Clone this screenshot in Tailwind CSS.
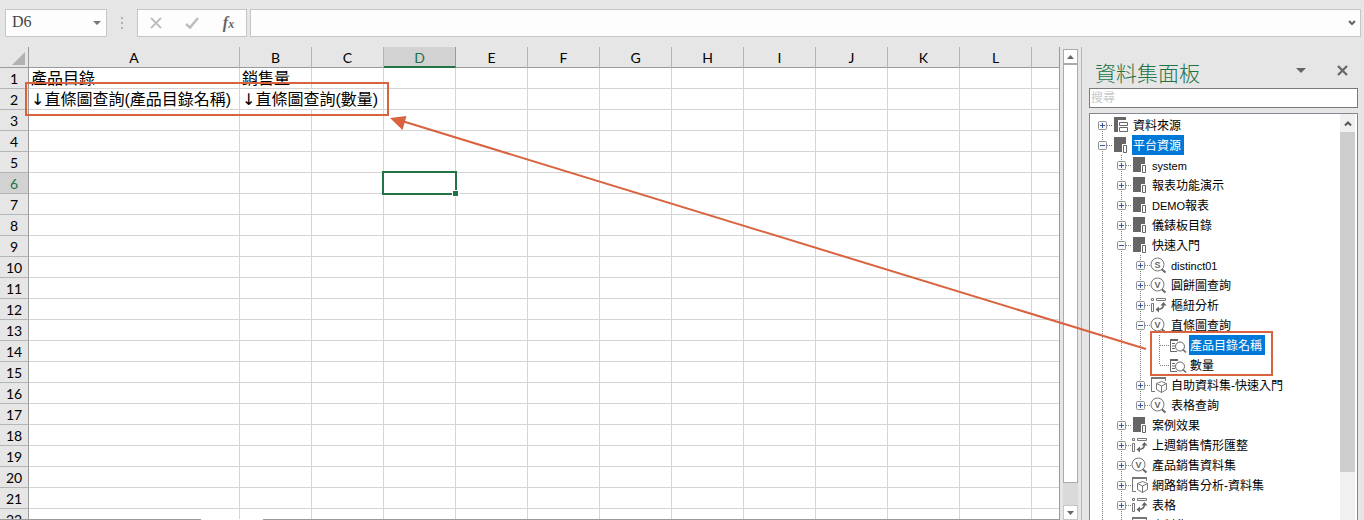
<!DOCTYPE html>
<html lang="zh-Hant">
<head>
  <meta charset="UTF-8" />
  <meta name="viewport" content="width=device-width, initial-scale=1.0" />
  <title>資料集面板</title>
  <script src="https://cdn.jsdelivr.net/npm/@tailwindcss/browser@4"></script>
</head>
<body class="relative flex h-screen flex-col overflow-hidden bg-[#e6e6e6] text-black font-['Liberation_Sans','Noto_Sans_CJK_TC',sans-serif]">

  <!-- Formula bar -->
  <header class="flex h-[47px] shrink-0 pt-[9px] pl-[5px] pr-[3px]">
    <div class="flex h-7 w-[102px] items-center border border-[#c6c6c6] bg-[#fdfdfd]">
      <input id="nameBox" aria-label="名稱方塊" value="D6" class="min-w-0 flex-1 pl-[6px] pb-[2px] text-[16px] leading-5 text-[#444] font-['Liberation_Serif',serif]" />
      <button aria-label="展開名稱" class="flex h-full w-[18px] items-center justify-center">
        <svg class="h-1 w-2" viewBox="0 0 8 4"><path d="M0 0h8L4 4z" fill="#777" /></svg>
      </button>
    </div>
    <div class="flex h-7 w-[30px] items-center justify-center">
      <svg class="h-3 w-0.5" viewBox="0 0 2 12"><path d="M0 0h2v2H0zM0 5h2v2H0zM0 10h2v2H0z" fill="#b0b0b0" /></svg>
    </div>
    <div class="flex h-7 w-[110px] items-center justify-around border border-[#c6c6c6] bg-[#fdfdfd]">
      <button aria-label="取消"><svg class="size-3" viewBox="0 0 12 12"><path d="M1 1l10 10M11 1L1 11" stroke="#bdbdbd" stroke-width="1.8" /></svg></button>
      <button aria-label="輸入"><svg class="h-3 w-[14px]" viewBox="0 0 14 12"><path d="M1 7l4 3.6L13 1" fill="none" stroke="#bdbdbd" stroke-width="2.4" /></svg></button>
      <button aria-label="插入函數" class="text-[16px] leading-4 font-bold italic text-[#666] font-['Liberation_Serif',serif]">f<span class="text-[12px]">x</span></button>
    </div>
    <div class="ml-[3px] flex h-7 flex-1 items-center border border-[#c6c6c6] bg-[#fdfdfd]">
      <input id="formulaInput" aria-label="資料編輯列" class="h-full min-w-0 flex-1 px-2" />
      <button aria-label="展開資料編輯列" class="mr-1">
        <svg class="h-[6px] w-2" viewBox="0 0 8 6"><path d="M1 1l3 3 3-3" fill="none" stroke="#666" stroke-width="2" /></svg>
      </button>
    </div>
  </header>

  <div class="flex min-h-0 flex-1">
    <!-- Worksheet -->
    <main class="relative min-w-0 flex-1 overflow-hidden border-r border-[#9a9a9a]">
      <table class="w-full table-fixed border-separate border-spacing-0">
        <thead id="sheetHead"></thead>
        <tbody id="sheetBody" class="bg-white"></tbody>
      </table>
      <div class="absolute bottom-0 left-0 h-px w-full bg-[#9a9a9a]">
        <div class="ml-[201px] h-px w-[62px] bg-white"></div>
      </div>
    </main>

    <!-- Sheet scrollbar -->
    <div class="flex w-[22px] shrink-0 flex-col border-r border-[#b5b5b5] bg-[#e6e6e6] pt-[2px] pl-[3px] pr-[3px]">
      <button aria-label="向上捲動" class="flex h-[15px] shrink-0 items-center justify-center border border-[#ababab] bg-white">
        <svg class="h-1 w-[7px]" viewBox="0 0 7 4"><path d="M0 4h7L3.500 0z" fill="#666" /></svg>
      </button>
      <div class="flex-1 bg-[#dadada]">
        <div class="h-[95%] border border-[#ababab] bg-white"></div>
      </div>
      <button aria-label="向下捲動" class="flex h-[15px] shrink-0 items-center justify-center border border-[#c6c6c6] bg-white">
        <svg class="h-1 w-[7px]" viewBox="0 0 7 4"><path d="M0 0h7L3.500 4z" fill="#666" /></svg>
      </button>
    </div>

    <!-- Dataset panel -->
    <aside class="flex w-[282px] shrink-0 flex-col pl-[7px] pr-[6px]">
      <div class="flex h-[41px] shrink-0 items-start pl-[6px] pr-[10px]">
        <h1 class="flex-1 pt-[13px] text-[21px] leading-7 font-light text-[#217346]">資料集面板</h1>
        <button aria-label="面板選項" class="mt-[21px] mr-[31px]"><svg class="h-[5px] w-[10px]" viewBox="0 0 10 5"><path d="M0 0h10L5 5z" fill="#666" /></svg></button>
        <button aria-label="關閉" class="mt-[18px]"><svg class="size-[11px]" viewBox="0 0 11 11"><path d="M1 1l9 9M10 1L1 10" stroke="#666" stroke-width="2.200" /></svg></button>
      </div>
      <input id="search" aria-label="搜尋" placeholder="搜尋" class="h-5 w-full shrink-0 border border-[#7a7a7a] bg-white px-px text-[12px] leading-4 placeholder:text-[#c8c8c8]" />
      <div class="mt-[5px] flex min-h-0 flex-1 overflow-hidden border border-b-0 border-[#828790] bg-white pr-[2px]">
        <ul id="tree" role="tree" class="min-w-0 flex-1 pt-px pl-[3px]"></ul>
        <div class="flex w-[15px] shrink-0 flex-col bg-[#f0f0f0] pt-px">
          <button aria-label="向上捲動" class="flex h-[17px] shrink-0 items-center justify-center">
            <svg class="h-[5px] w-2" viewBox="0 0 8 5"><path d="M1 4.500l3-3 3 3" fill="none" stroke="#555" stroke-width="2" /></svg>
          </button>
          <div class="h-[340px] shrink-0 bg-[#cdcdcd]"></div>
        </div>
      </div>
    </aside>
  </div>

  <!-- Callouts -->
  <div class="absolute top-[82px] left-[25px] h-[34px] w-[364px] border-2 border-[#d9623f]"></div>
  <div class="absolute top-[331px] right-[91px] h-[45px] w-[123px] border-2 border-[#d9623f]"></div>
  <svg class="pointer-events-none absolute top-0 left-0 h-[520px] w-[1364px]" viewBox="0 0 1364 520">
    <path d="M1146 349L402 121" stroke="#d9623f" stroke-width="2" />
    <path d="M390 118l16.500-2-4 14z" fill="#d9623f" />
  </svg>

  <script>
    const columns = ['A', 'B', 'C', 'D', 'E', 'F', 'G', 'H', 'I', 'J', 'K', 'L'];
    const arrow = `<span class="font-['DejaVu_Sans',sans-serif]">↓</span>`;
    const cells = {
      A1: '產品目錄',
      B1: '銷售量',
      A2: arrow + '直條圖查詢(產品目錄名稱)',
      B2: arrow + '直條圖查詢(數量)',
    };
    const active = { col: 'D', row: 6 };

    // Column headers
    const corner = `
      <th class="h-[21px] w-[29px] border-r border-b border-[#9a9a9a] p-0">
        <svg class="ml-3 mt-0.5 size-[13px]" viewBox="0 0 13 13"><path d="M13 0v13H0z" fill="#b1b1b1" /></svg>
      </th>`;
    document.getElementById('sheetHead').innerHTML = `
      <tr class="h-[21px] text-[14px] leading-4 font-['Lato',sans-serif]">
        ${corner}
        ${columns.map(c => `
          <th scope="col" class="${c === 'A' ? 'w-[211px]' : 'w-[72px]'} h-[21px] border-r p-0 pt-0.5 font-normal
            ${c === active.col ? 'border-r-[#9a9a9a] border-b-2 border-b-[#217346] bg-[#d2d2d2] text-[#217346]' : 'border-b border-r-[#b5b5b5] border-b-[#9a9a9a]'}">${c}</th>`).join('')}
        <th class="border-b border-b-[#9a9a9a] p-0"></th>
      </tr>`;

    // Rows
    let rows = '';
    for (let r = 1; r <= 22; r++) {
      rows += `<tr class="h-[21px]">
        <th scope="row" class="h-[21px] border-r border-b border-r-[#9a9a9a] border-b-[#b5b5b5] p-0 pt-0.5 text-[14px] leading-4 font-normal font-['Lato',sans-serif]
          ${r === active.row ? 'bg-[#d2d2d2] text-[#217346]' : 'bg-[#e6e6e6]'}">${r}</th>`;
      columns.forEach(c => {
        const text = cells[c + r] || '';
        const selected = c === active.col && r === active.row;
        rows += `<td class="h-[21px] border-b border-[#d4d4d4] p-0 ${selected ? 'relative z-10' : ''} ${c + r === 'B2' ? '' : 'border-r'}">
          ${text ? `<div class="h-5 pl-[2px] text-[16px] leading-[21px] whitespace-nowrap">${text}</div>` : ''}
          ${selected ? `<div class="absolute -top-[2px] -left-[2px] h-6 w-[75px] border-2 border-[#217346]">
            <div class="absolute -right-[4px] -bottom-[4px] size-[7px] border border-white bg-[#217346]"></div>
          </div>` : ''}
        </td>`;
      });
      rows += '<td class="border-b border-[#d4d4d4] p-0"></td></tr>';
    }
    document.getElementById('sheetBody').innerHTML = rows;

    // Tree icons
    const circle = letter => `
      <circle cx="7.500" cy="9.500" r="6.500" fill="#fff" stroke="#777" />
      <path d="M12 14.500l3.500 3" stroke="#666" stroke-width="2" />
      <text x="7.500" y="13" text-anchor="middle" font-size="9" font-weight="bold" fill="#666">${letter}</text>`;
    const icons = {
      source: `
        <path d="M2 2h12v3H6v12H2z" fill="#666" />
        <path d="M7.500 7.500h8v3h-8zM7.500 12.500h8v4h-8z" fill="#fff" stroke="#666" />`,
      folder: `
        <path d="M2 2h12v15H2z" fill="#666" />
        <path d="M10 9h6v10h-6z" fill="#fff" />
        <path d="M11.500 10.500h3v7h-3z" fill="#fff" stroke="#666" />`,
      sql: circle('S'),
      view: circle('V'),
      pivot: `
        <path d="M1.500 3.500h2v2h-2zM6.500 3.500h9v2h-9zM1.500 8.500h2v8h-2z" fill="none" stroke="#777" />
        <path d="M13.500 9c0 3.500-2 5.500-6 5.500" fill="none" stroke="#666" stroke-width="1.500" />
        <path d="M13.500 7l3 3.500h-6zM5.500 14.500l3.500-3v6z" fill="#666" />`,
      cube: `
        <path d="M5 16.500H1.500V3h14v3" fill="none" stroke="#777" />
        <path d="M1 2h15v2H1z" fill="#777" />
        <path d="M11.500 6.500l5 2v6l-5 3-5-3v-6zM6.500 8.500l5 2.500 5-2.500M11.500 11v6.500" fill="#fff" stroke="#777" />`,
      field: `
        <path d="M1 4h8v2H1z" fill="#666" />
        <path d="M1.500 5v11.500H8M3 8.500h3M3 11h3M3 13.500h3" fill="none" stroke="#666" />
        <circle cx="11" cy="11.500" r="4.500" fill="#fff" stroke="#666" />
        <path d="M14 14.500l3 3" stroke="#666" stroke-width="1.500" />`,
    };

    // state: '+' collapsed, '-' expanded, '' leaf
    const nodes = [
      { level: 0, state: '+', icon: 'source', label: '資料來源' },
      { level: 0, state: '-', icon: 'folder', label: '平台資源', selected: true },
      { level: 1, state: '+', icon: 'folder', label: 'system' },
      { level: 1, state: '+', icon: 'folder', label: '報表功能演示' },
      { level: 1, state: '+', icon: 'folder', label: 'DEMO報表' },
      { level: 1, state: '+', icon: 'folder', label: '儀錶板目錄' },
      { level: 1, state: '-', icon: 'folder', label: '快速入門' },
      { level: 2, state: '+', icon: 'sql', label: 'distinct01' },
      { level: 2, state: '+', icon: 'view', label: '圓餅圖查詢' },
      { level: 2, state: '+', icon: 'pivot', label: '樞紐分析' },
      { level: 2, state: '-', icon: 'view', label: '直條圖查詢' },
      { level: 3, state: '', icon: 'field', label: '產品目錄名稱', selected: true },
      { level: 3, state: '', icon: 'field', label: '數量', last: true },
      { level: 2, state: '+', icon: 'cube', label: '自助資料集-快速入門' },
      { level: 2, state: '+', icon: 'view', label: '表格查詢', last: true },
      { level: 1, state: '+', icon: 'folder', label: '案例效果' },
      { level: 1, state: '+', icon: 'pivot', label: '上週銷售情形匯整' },
      { level: 1, state: '+', icon: 'view', label: '產品銷售資料集' },
      { level: 1, state: '+', icon: 'cube', label: '網路銷售分析-資料集' },
      { level: 1, state: '+', icon: 'pivot', label: '表格' },
      { level: 1, state: '+', icon: 'cube', label: '資料集' },
    ];

    const guide = '<path d="M9.500 0v20" stroke="#808080" stroke-dasharray="1 1" />';

    function branch(node, first) {
      const top = first ? 10 : 0;
      const bottom = node.last ? 10 : 20;
      let box = '';
      if (node.state) {
        box = `<rect x="5.500" y="6.500" width="8" height="8" rx="1" fill="#f8f8f8" stroke="#919191" />
          <path d="M7 10.500h5${node.state === '+' ? 'M9.500 8v5' : ''}" stroke="#3b56a4" />`;
      }
      return `<path d="M9.500 ${top}V${bottom}M10 10.500h9" stroke="#808080" stroke-dasharray="1 1" />${box}`;
    }

    document.getElementById('tree').innerHTML = nodes.map((node, i) => {
      let cols = '';
      for (let l = 0; l < node.level; l++) {
        cols += `<svg class="h-5 w-[19px] shrink-0" viewBox="0 0 19 20">${guide}</svg>`;
      }
      const label = node.label.replace(/[A-Za-z0-9]+/g, '<span class="text-[11px]">$&</span>');
      return `<li role="treeitem" class="flex h-5">
        ${cols}
        <svg class="h-5 w-[19px] shrink-0" viewBox="0 0 19 20">${branch(node, i === 0)}</svg>
        <svg class="h-5 w-[18px] shrink-0" viewBox="0 0 18 20">${icons[node.icon]}</svg>
        <span class="ml-[2px] h-5 pl-px pr-[3px] text-[12px] leading-[22px] whitespace-nowrap ${node.selected ? 'bg-[#0078d7] text-white' : ''}">${label}</span>
      </li>`;
    }).join('');
  </script>
</body>
</html>
